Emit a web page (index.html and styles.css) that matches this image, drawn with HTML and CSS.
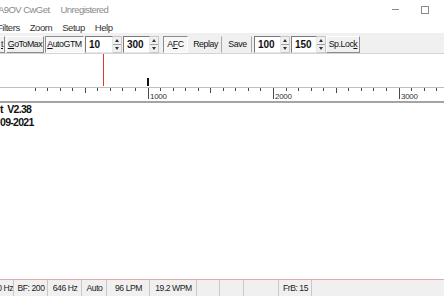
FILE: index.html
```html
<!DOCTYPE html>
<html>
<head>
<meta charset="utf-8">
<link rel="stylesheet" href="styles.css">
</head>
<body>
<div class="win">
  <div class="titlebar">
    <span class="app">A9OV CwGet</span>
    <span class="reg">Unregistered</span>
    <span class="ctls"><span class="min"></span><span class="max"></span></span>
  </div>
  <div class="menubar">
    <span class="mi first">Filters</span>
    <span class="mi">Zoom</span>
    <span class="mi">Setup</span>
    <span class="mi">Help</span>
  </div>
  <div class="toolbar">
    <span class="btn cut"><u>t</u></span>
    <span class="btn w-goto"><u>G</u>oToMax</span>
    <span class="btn pressed w-auto"><u>A</u>utoGTM</span>
    <span class="edit w-e1">10</span>
    <span class="spin"><span class="up"></span><span class="dn"></span></span>
    <span class="edit w-e2">300</span>
    <span class="spin"><span class="up"></span><span class="dn"></span></span>
    <span class="btn pressed w-afc">A<u>F</u>C</span>
    <span class="btn flat w-replay">Replay</span>
    <span class="btn flat w-save">Save</span>
    <span class="edit w-e3">100</span>
    <span class="spin"><span class="up"></span><span class="dn"></span></span>
    <span class="edit w-e4">150</span>
    <span class="spin"><span class="up"></span><span class="dn"></span></span>
    <span class="btn w-lock">Sp.Loc<u>k</u></span>
  </div>
  <div class="scope">
    <svg class="scale" width="444" height="47" viewBox="0 0 444 47">
      <rect x="103" y="0" width="1" height="32" fill="#e03535"/>
      <rect x="147" y="24" width="2" height="8" fill="#111"/>
      <line x1="0" y1="33.5" x2="444" y2="33.5" stroke="#bdbdbd" stroke-width="1"/>
      <path stroke="#4a4a4a" stroke-width="1" fill="none" d="
        M35.5 34V37 M47.5 34V37 M60.5 34V37 M72.5 34V37 M85.5 34V39 M97.5 34V37 M110.5 34V37 M122.5 34V37 M135.5 34V37
        M148.5 34V45
        M160.5 34V37 M173.5 34V37 M185.5 34V37 M198.5 34V37 M210.5 34V39 M223.5 34V37 M235.5 34V37 M248.5 34V37 M260.5 34V37
        M273.5 34V45
        M286.5 34V37 M298.5 34V37 M311.5 34V37 M323.5 34V37 M336.5 34V39 M348.5 34V37 M361.5 34V37 M373.5 34V37 M386.5 34V37
        M399.5 34V45
        M411.5 34V37 M424.5 34V37 M436.5 34V37"/>
      <text x="150" y="45" class="lbl">1000</text>
      <text x="275" y="45" class="lbl">2000</text>
      <text x="401" y="45" class="lbl">3000</text>
    </svg>
  </div>
  <div class="textarea">
    <div class="line">t&nbsp;&nbsp;V2.38</div>
    <div class="line">09-2021</div>
  </div>
  <div class="statusbar">
    <span class="pan p0">0 Hz</span>
    <span class="pan p1">BF: 200</span>
    <span class="pan p2">646 Hz</span>
    <span class="pan p3">Auto</span>
    <span class="pan p4">96 LPM</span>
    <span class="pan p5">19.2 WPM</span>
    <span class="pan p6"></span>
    <span class="pan p7"></span>
    <span class="pan p8"></span>
    <span class="pan p9">FrB: 15</span>
    <span class="pan p10"></span>
  </div>
</div>
</body>
</html>
```
FILE: styles.css
```css
* { box-sizing: border-box; }
html, body { margin: 0; padding: 0; }
body {
  width: 444px;
  height: 296px;
  overflow: hidden;
  background: #ffffff;
  font-family: "Liberation Sans", Arial, sans-serif;
}
.win {
  display: flex;
  flex-direction: column;
  width: 444px;
  height: 296px;
  overflow: hidden;
}
.titlebar {
  height: 19px;
  display: flex;
  align-items: center;
  background: #fff;
  color: #8a8a8a;
  font-size: 9.5px;
  letter-spacing: -0.55px;
  white-space: nowrap;
}
.titlebar .app { margin-left: -2px; }
.titlebar .reg { margin-left: 11px; }
.ctls {
  margin-left: auto;
  display: flex;
  align-items: center;
  gap: 22px;
  padding-right: 15px;
}
.min { width: 7px; height: 1px; background: #8a8a8a; }
.max { width: 8px; height: 8px; border: 1px solid #8a8a8a; }
.menubar {
  height: 14px;
  display: flex;
  align-items: center;
  gap: 10px;
  color: #333;
  font-size: 9.5px;
  letter-spacing: -0.45px;
  white-space: nowrap;
  padding-top: 2px;
}
.menubar .first { margin-left: -3px; }
.toolbar {
  height: 21px;
  display: flex;
  align-items: center;
  background: #f0f0f0;
  border-bottom: 1px solid #d4d4d4;
  padding-top: 2px;
  font-size: 8.8px;
  letter-spacing: -0.45px;
  color: #111;
  white-space: nowrap;
}
.btn {
  height: 17px;
  display: flex;
  align-items: center;
  justify-content: center;
  background: #f0f0f0;
  border-top: 1px solid #ffffff;
  border-left: 1px solid #ffffff;
  border-right: 1px solid #8c8c8c;
  border-bottom: 1px solid #8c8c8c;
  margin-left: 1px;
  flex: none;
}
.btn.pressed {
  background: #f7f7f7;
  border-top: 1px solid #8c8c8c;
  border-left: 1px solid #8c8c8c;
  border-right: 1px solid #ffffff;
  border-bottom: 1px solid #ffffff;
}
.btn.flat {
  border-top-color: #f0f0f0;
  border-left-color: #f0f0f0;
  border-right-color: #a8a8a8;
  border-bottom-color: #f0f0f0;
}
.btn.cut { width: 25px; margin-left: -20px; justify-content: flex-end; padding-right: 1px; }
.w-goto { width: 38px; }
.w-auto { width: 39px; }
.w-afc { width: 25px; margin-left: 4px !important; }
.w-replay { width: 33px; }
.w-save { width: 29px; }
.w-lock { width: 34px; margin-left: 0; }
.edit {
  height: 17px;
  background: #fff;
  border-top: 1px solid #7a7a7a;
  border-left: 1px solid #7a7a7a;
  border-right: 1px solid #e6e6e6;
  border-bottom: 1px solid #e6e6e6;
  font-weight: bold;
  font-size: 10px;
  letter-spacing: 0;
  padding-left: 3px;
  display: flex;
  align-items: center;
  flex: none;
  margin-left: 1px;
}
.w-e1 { width: 28px; }
.w-e2 { width: 27px; }
.w-e3 { width: 27px; margin-left: 2px; }
.w-e4 { width: 26px; }
.spin {
  width: 9px;
  height: 17px;
  display: flex;
  flex-direction: column;
  flex: none;
  background: #f0f0f0;
  border: 1px solid #c8c8c8;
  border-left: none;
}
.spin .up, .spin .dn {
  flex: 1;
  display: flex;
  align-items: center;
  justify-content: center;
}
.spin .up { border-bottom: 1px solid #a0a0a0; }
.spin .up::before {
  content: "";
  border-left: 2.5px solid transparent;
  border-right: 2.5px solid transparent;
  border-bottom: 3px solid #333;
}
.spin .dn::before {
  content: "";
  border-left: 2.5px solid transparent;
  border-right: 2.5px solid transparent;
  border-top: 3px solid #333;
}
.scope {
  height: 49px;
  background: #fff;
  border-bottom: 2px solid #a4a4a4;
  flex: none;
}
.scale { display: block; }
.lbl {
  font-family: "Liberation Sans", Arial, sans-serif;
  font-size: 8px;
  letter-spacing: -0.3px;
  fill: #333;
}
.textarea {
  flex: 1;
  background: #fff;
  padding-top: 0;
}
.line {
  font-weight: bold;
  font-size: 10.5px;
  letter-spacing: -0.7px;
  line-height: 12.5px;
  color: #111;
  white-space: nowrap;
}
.statusbar {
  height: 17px;
  flex: none;
  display: flex;
  background: #f0f0f0;
  border-top: 1px solid #e2aaaa;
  font-size: 8.6px;
  letter-spacing: -0.45px;
  color: #222;
  white-space: nowrap;
}
.pan {
  display: flex;
  align-items: center;
  justify-content: center;
  border-right: 1px solid #c8c8c8;
  margin-right: 1px;
  flex: none;
  overflow: hidden;
}
.p0 { width: 17px; margin-left: -3px; justify-content: flex-end; }
.p1 { width: 33px; }
.p2 { width: 33px; }
.p3 { width: 24px; }
.p4 { width: 42px; }
.p5 { width: 46px; }
.p6 { width: 22px; }
.p7 { width: 23px; }
.p8 { width: 34px; }
.p9 { width: 32px; }
.p10 { flex: 1; border-right: none; }
```
